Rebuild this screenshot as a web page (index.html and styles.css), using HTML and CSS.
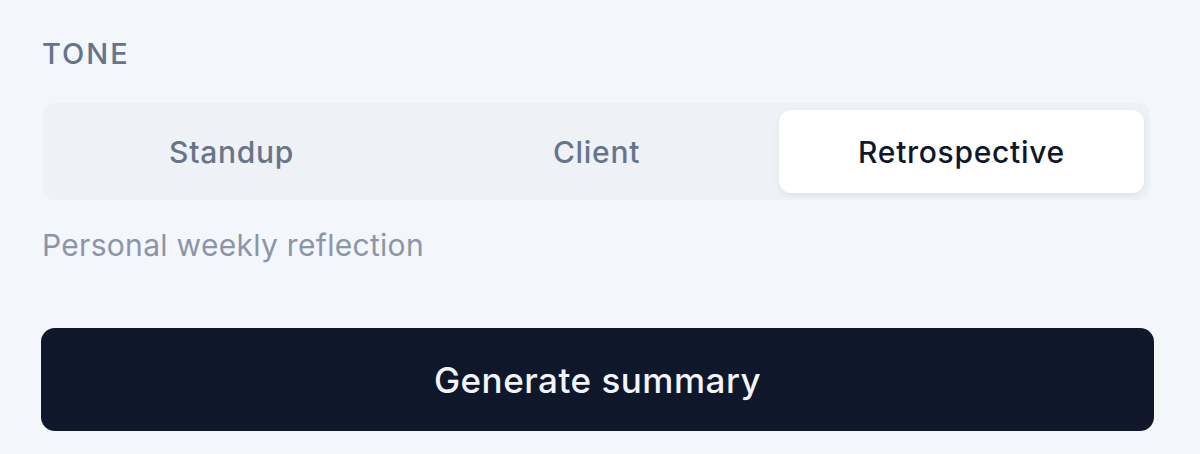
FILE: index.html
```html
<!DOCTYPE html>
<html lang="en">
<head>
    <meta charset="UTF-8">
    <meta name="viewport" content="width=device-width, initial-scale=1.0">
    <title>Tone</title>
    <link rel="stylesheet" href="styles.css">
</head>
<body>
    <div class="panel">
        <div class="label">TONE</div>

        <div class="tabs">
            <button class="tab">Standup</button>
            <button class="tab">Client</button>
            <button class="tab active">Retrospective</button>
        </div>

        <p class="hint">Personal weekly reflection</p>

        <button class="generate">Generate summary</button>
    </div>
</body>
</html>
```

FILE: styles.css
```css
body {
    font-family: Inter, "Noto Sans", sans-serif;
    margin: 0;
    background-color: #f3f6fb;
}
.panel {
    display: flex;
    flex-direction: column;
    padding: 36px 46px 0 41px;
}
.label {
    margin-left: 1px;
    font-size: 29px;
    line-height: 36px;
    font-weight: 500;
    letter-spacing: 2px;
    color: #64748b;
}
.tabs {
    display: grid;
    grid-template-columns: 1fr 1fr 1fr;
    margin: 31px 4px 0 2px;
    padding: 7px 6px;
    background: #eef2f7;
    border-radius: 12px;
}
.tab {
    height: 83px;
    border: none;
    background: transparent;
    font-family: inherit;
    font-size: 30px;
    font-weight: 500;
    letter-spacing: 0.7px;
    color: #687589;
    border-radius: 12px;
}
.tab.active {
    background: white;
    color: #0f172a;
    box-shadow: 0 2px 6px rgba(15, 23, 42, 0.08);
}
.hint {
    margin: 27px 0 0 1px;
    font-size: 30px;
    line-height: 36px;
    letter-spacing: 0.3px;
    color: #8b95a7;
}
.generate {
    margin-top: 65px;
    height: 103px;
    border: none;
    border-radius: 14px;
    background: #0f172a;
    color: #f1f5f9;
    font-family: inherit;
    font-size: 35px;
    font-weight: 500;
    letter-spacing: 0.5px;
}
```
